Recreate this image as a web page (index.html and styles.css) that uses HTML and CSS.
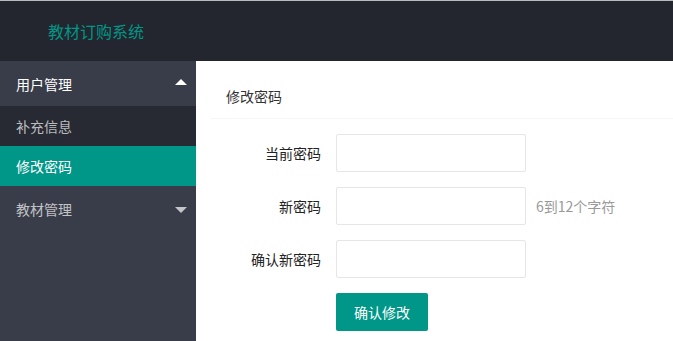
FILE: index.html
```html
<!doctype html>
<html lang="zh-CN">
    <head>
        <meta charset="utf-8">
        <title>修改密码</title>
        <link rel="stylesheet" href="styles.css">
    </head>
    <body>
        <div class="header">
            <div class="logo">教材订购系统</div>
        </div>
        <div class="wrap">
            <div class="side">
                <div class="nav-item open">
                    <span>用户管理</span>
                    <span class="more up"></span>
                </div>
                <div class="child">
                    <div class="child-item">补充信息</div>
                    <div class="child-item active">修改密码</div>
                </div>
                <div class="nav-item">
                    <span>教材管理</span>
                    <span class="more"></span>
                </div>
            </div>
            <div class="main">
                <div class="card">
                    <div class="card-header">修改密码</div>
                    <div class="card-body">
                        <form class="form">
                            <div class="form-item">
                                <label class="form-label">当前密码</label>
                                <input type="password" class="input">
                            </div>
                            <div class="form-item">
                                <label class="form-label">新密码</label>
                                <input type="password" class="input">
                                <div class="form-mid">6到12个字符</div>
                            </div>
                            <div class="form-item">
                                <label class="form-label">确认新密码</label>
                                <input type="password" class="input">
                            </div>
                            <div class="form-item">
                                <div class="form-label"></div>
                                <button type="button" class="btn">确认修改</button>
                            </div>
                        </form>
                    </div>
                </div>
            </div>
        </div>
    </body>
</html>
```

FILE: styles.css
```css
* {
    box-sizing: border-box;
}
html, body {
    height: 100%;
}
body {
    margin: 0;
    font-family: "Noto Sans CJK SC", "Liberation Sans", sans-serif;
    font-size: 14px;
    color: #333;
    display: flex;
    flex-direction: column;
    overflow: hidden;
}
.header {
    height: 61px;
    flex-shrink: 0;
    background: #23262e;
    border-top: 1px solid #b9bbbf;
    display: flex;
    align-items: center;
}
.logo {
    padding-left: 48px;
    font-size: 16px;
    color: #009688;
    line-height: 20px;
}
.wrap {
    flex: 1;
    display: flex;
    min-height: 0;
}
.side {
    width: 196px;
    flex-shrink: 0;
    background: #393d49;
}
.nav-item {
    height: 45px;
    padding: 0 9px 0 16px;
    display: flex;
    align-items: center;
    justify-content: space-between;
    color: rgba(255, 255, 255, 0.7);
}
.nav-item.open {
    color: #fff;
}
.more {
    width: 0;
    height: 0;
    border-left: 6px solid transparent;
    border-right: 6px solid transparent;
    border-top: 6px solid rgba(255, 255, 255, 0.7);
    margin-top: 3px;
}
.more.up {
    border-top: none;
    border-bottom: 6px solid #fff;
    margin-top: -3px;
}
.child {
    background: rgba(0, 0, 0, 0.3);
}
.child-item {
    height: 40px;
    padding-left: 16px;
    display: flex;
    align-items: center;
    color: rgba(255, 255, 255, 0.7);
}
.child-item.active {
    background: #009688;
    color: #fff;
}
.main {
    flex: 1;
    background: #fff;
    padding: 15px 0 0 15px;
}
.card-header {
    height: 43px;
    line-height: 41px;
    padding: 0 15px;
    border-bottom: 1px solid #f6f6f6;
    color: #333;
}
.card-body {
    padding: 15px 15px 0;
}
.form-item {
    display: flex;
    align-items: flex-start;
    margin-bottom: 15px;
}
.form-item:last-child {
    margin-bottom: 0;
}
.form-label {
    width: 110px;
    padding: 9px 15px;
    line-height: 20px;
    text-align: right;
    color: #222;
}
.input {
    width: 190px;
    height: 38px;
    border: 1px solid #e6e6e6;
    border-radius: 2px;
    padding: 0 10px;
    font-family: inherit;
    font-size: 14px;
    outline: none;
}
.form-mid {
    margin-left: 10px;
    padding: 9px 0;
    line-height: 20px;
    color: #999;
}
.btn {
    height: 38px;
    padding: 0 18px;
    border: none;
    border-radius: 2px;
    background: #009688;
    color: #fff;
    font-family: inherit;
    font-size: 14px;
    cursor: pointer;
}
```
